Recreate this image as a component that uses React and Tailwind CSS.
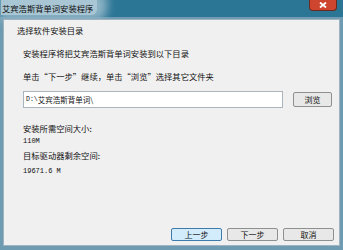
const cjk = { fontFamily: '"SimSun", "Noto Sans CJK SC", sans-serif' };
const mono = { fontFamily: '"Liberation Mono", monospace' };

const WinButton = ({ children, active }) => (
  <button
    className={
      "h-[13px] w-[51px] rounded-[2px] border text-[8px] leading-[11px] text-[#111] " +
      (active
        ? "border-[#3d7bad] bg-[#d3ecfb]"
        : "border-[#8e8f8f] bg-[#e8e8e8]")
    }
    style={cjk}
  >
    {children}
  </button>
);

export default function App() {
  return (
    <div
      lang="zh-CN"
      className="w-[343px] h-[250px] flex flex-col bg-[#6e9bb1]"
      style={cjk}
    >
      <div className="h-[17px] flex items-start justify-between bg-[#2b7595]">
        <span className="ml-[1px] pl-[1px] pt-[2px] pr-[4px] h-[15px] text-[8.3px] leading-[12px] text-[#0a0a0a] bg-[#a9c6d4] rounded-br-[6px] shadow-[4px_0_10px_6px_#8fb4c6]">
          艾宾浩斯背单词安装程序
        </span>
        <div className="mr-[6px] h-[11px] w-[28px] rounded-b-[4px] border border-t-0 border-[#6b2a1e] bg-[#cf4630] flex items-center justify-center">
          <svg width="8" height="6" viewBox="0 0 8 6">
            <path d="M1 0.5 L7 5.5 M7 0.5 L1 5.5" stroke="white" strokeWidth="1.8" />
          </svg>
        </div>
      </div>
      <div className="flex-1 mx-[3px] mt-[2px] mb-[4px] border border-[#9fb3c0] bg-[#f0f0f0] flex flex-col">
        <div className="pl-[13px] mt-[3px] text-[8.3px] leading-[14px] text-[#111]">
          选择软件安装目录
        </div>
        <div className="pl-[19px] flex flex-col text-[8.3px] text-[#111]">
          <div className="mt-[9px] leading-[14px]">安装程序将把艾宾浩斯背单词安装到以下目录</div>
          <div className="mt-[9px] leading-[14px]">
            单击“下一步”继续，单击“浏览”选择其它文件夹
          </div>
          <div className="mt-[8px] flex items-center">
            <div className="h-[17px] w-[260px] border border-[#a9b4bd] bg-white pl-[2px] flex items-center text-[7.5px] leading-[10px]">
              <span style={mono} className="text-[6.5px]">D:\</span>
              <span>艾宾浩斯背单词\</span>
            </div>
            <button
              className="ml-[10px] h-[15px] w-[39px] rounded-[2px] border border-[#8e8f8f] bg-[#e8e8e8] text-[8px] leading-[13px]"
              style={cjk}
            >
              浏览
            </button>
          </div>
          <div className="mt-[13px] leading-[14px]">安装所需空间大小:</div>
          <div className="leading-[12px] text-[7px]" style={mono}>
            110M
          </div>
          <div className="mt-[1px] leading-[14px]">目标驱动器剩余空间:</div>
          <div className="mt-[3px] leading-[12px] text-[7px]" style={mono}>
            19671.6 M
          </div>
        </div>
        <div className="flex-1" />
        <div className="flex justify-end gap-[5px] pr-[5px] mb-[4px]">
          <WinButton active>上一步</WinButton>
          <WinButton>下一步</WinButton>
          <WinButton>取消</WinButton>
        </div>
      </div>
    </div>
  );
}
